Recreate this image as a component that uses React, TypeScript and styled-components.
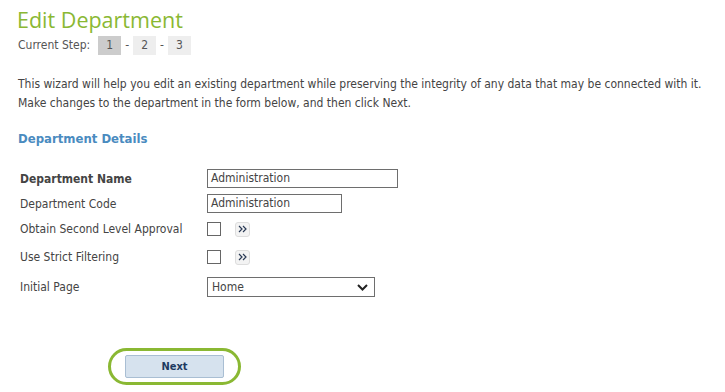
import React from 'react';
import styled, { createGlobalStyle } from 'styled-components';

const GlobalStyle = createGlobalStyle`
  body {
    margin: 0;
    background: #ffffff;
    font-family: "DejaVu Sans Condensed", "DejaVu Sans", sans-serif;
    color: #444444;
  }
`;

const Page = styled.div`
  padding: 6px 0 0 18px;
`;

const Title = styled.h1`
  margin: 0 0 0 -1px;
  font-family: "Open Sans", "Liberation Sans", sans-serif;
  font-weight: 400;
  font-size: 21.5px;
  line-height: 28px;
  color: #8ab833;
`;

const StepBar = styled.div`
  display: flex;
  align-items: center;
  gap: 4px;
  font-size: 12px;
  color: #555555;
  height: 20px;
  margin-top: 1px;
`;

const StepBox = styled.span<{ active?: boolean }>`
  display: inline-flex;
  align-items: center;
  justify-content: center;
  width: 23px;
  height: 19px;
  margin-left: ${p => (p.active ? '4px' : '0')};
  background: ${p => (p.active ? '#cccccc' : '#eeeeee')};
  color: #555555;
`;

const Intro = styled.p`
  margin: 20px 0 0 0;
  font-size: 12px;
  line-height: 19px;
  color: #444444;
`;

const SectionTitle = styled.h2`
  margin: 18px 0 0 0;
  font-size: 13px;
  font-weight: 700;
  color: #4a8bbf;
`;

const Form = styled.div`
  margin-top: 20px;
  padding-left: 2px;
  display: flex;
  flex-direction: column;
`;

const Row = styled.div<{ h: number }>`
  display: grid;
  grid-template-columns: 187px 1fr;
  align-items: center;
  height: ${p => p.h}px;
`;

const Label = styled.label<{ bold?: boolean }>`
  font-size: 12px;
  font-weight: ${p => (p.bold ? 700 : 400)};
  color: #444444;
`;

const TextInput = styled.div<{ w: number }>`
  width: ${p => p.w}px;
  height: 19px;
  box-sizing: border-box;
  border: 1px solid #6e6e6e;
  padding: 0 3px;
  font-size: 12px;
  line-height: 17px;
  color: #444444;
`;

const Inline = styled.div`
  display: flex;
  align-items: center;
  gap: 14px;
`;

const Checkbox = styled.span`
  width: 14px;
  height: 14px;
  box-sizing: border-box;
  border: 1px solid #666666;
  background: #fff;
`;

const MoreButton = styled.span`
  display: inline-flex;
  align-items: center;
  justify-content: center;
  width: 15px;
  height: 15px;
  box-sizing: border-box;
  border: 1px solid #dddddd;
  border-radius: 3px;
  background: #f3f3f3;
`;

const Select = styled.div`
  width: 168px;
  height: 20px;
  box-sizing: border-box;
  border: 1px solid #6e6e6e;
  padding: 0 6px 0 4px;
  display: flex;
  align-items: center;
  justify-content: space-between;
  font-size: 12px;
  color: #444444;
`;

const Footer = styled.div`
  margin-top: 46px;
  padding-left: 90px;
`;

const Highlight = styled.div`
  width: 133px;
  height: 37px;
  box-sizing: border-box;
  border: 3px solid #8ab833;
  border-radius: 20px;
  display: flex;
  align-items: center;
  justify-content: center;
`;

const NextButton = styled.button`
  width: 99px;
  height: 23px;
  border: 1px solid #a9bed3;
  border-radius: 2px;
  background: #d6e2ee;
  color: #1d3a5f;
  font-family: "DejaVu Sans Condensed", "DejaVu Sans", sans-serif;
  font-weight: 700;
  font-size: 11px;
  padding: 0;
`;

const Chevrons = () => (
  <svg width="9" height="8" viewBox="0 0 9 8">
    <path d="M1 1 L4 4 L1 7 M5 1 L8 4 L5 7" fill="none" stroke="#2a3a55" strokeWidth="1.2" />
  </svg>
);

const Caret = () => (
  <svg width="11" height="7" viewBox="0 0 11 7">
    <path d="M1 1 L5.5 5.5 L10 1" fill="none" stroke="#222" strokeWidth="2" />
  </svg>
);

const App: React.FC = () => (
  <>
    <GlobalStyle />
    <Page>
      <Title>Edit Department</Title>
      <StepBar>
        <span>Current Step:</span>
        <StepBox active>1</StepBox>
        <span>-</span>
        <StepBox>2</StepBox>
        <span>-</span>
        <StepBox>3</StepBox>
      </StepBar>
      <Intro>
        This wizard will help you edit an existing department while preserving the integrity of any data that may be connected with it.
        <br />
        Make changes to the department in the form below, and then click Next.
      </Intro>
      <SectionTitle>Department Details</SectionTitle>
      <Form>
        <Row h={25}>
          <Label bold>Department Name</Label>
          <TextInput w={191}>Administration</TextInput>
        </Row>
        <Row h={25}>
          <Label>Department Code</Label>
          <TextInput w={135}>Administration</TextInput>
        </Row>
        <Row h={26}>
          <Label>Obtain Second Level Approval</Label>
          <Inline>
            <Checkbox />
            <MoreButton><Chevrons /></MoreButton>
          </Inline>
        </Row>
        <Row h={30}>
          <Label>Use Strict Filtering</Label>
          <Inline>
            <Checkbox />
            <MoreButton><Chevrons /></MoreButton>
          </Inline>
        </Row>
        <Row h={30}>
          <Label>Initial Page</Label>
          <Select>
            <span>Home</span>
            <Caret />
          </Select>
        </Row>
      </Form>
      <Footer>
        <Highlight>
          <NextButton>Next</NextButton>
        </Highlight>
      </Footer>
    </Page>
  </>
);

export default App;
